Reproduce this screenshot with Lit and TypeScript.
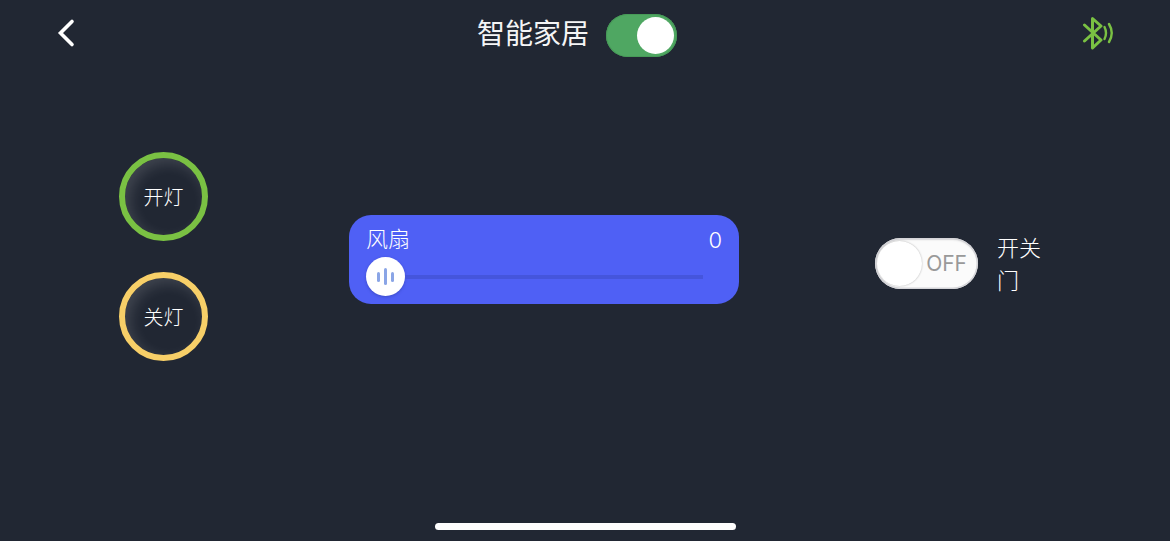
import { LitElement, html, css } from "lit";
import { customElement } from "lit/decorators.js";

@customElement("app-root")
export class AppRoot extends LitElement {
  static styles = css`
    :host {
      display: block;
      width: 1170px;
      height: 541px;
      overflow: hidden;
      font-family: "Noto Sans CJK SC", sans-serif;
      color: #fff;
    }
    .page {
      display: flex;
      flex-direction: column;
      height: 541px;
      background: #212733;
    }
    .header {
      display: grid;
      grid-template-columns: 477px auto 1fr;
      align-items: center;
      height: 43px;
      padding-top: 14px;
    }
    .back {
      display: block;
      margin: -5px 0 0 56px;
    }
    .title-group {
      display: flex;
      align-items: center;
      gap: 17px;
    }
    .title {
      font-size: 28px;
      line-height: 40px;
      font-weight: 400;
      margin-top: -7px;
      color: #f4f5f6;
    }
    .switch-on {
      box-sizing: border-box;
      display: flex;
      justify-content: flex-end;
      align-items: center;
      width: 71px;
      height: 43px;
      padding-right: 3px;
      border-radius: 22px;
      background: #4fa762;
      box-shadow: inset 0 0 0 1px #479a58;
    }
    .switch-on i {
      display: block;
      width: 37px;
      height: 37px;
      border-radius: 50%;
      background: #fff;
    }
    .bt {
      display: block;
      justify-self: end;
      margin: -6px 55px 0 0;
    }
    .body {
      display: flex;
      align-items: flex-start;
      padding: 95px 0 0 119px;
    }
    .lights {
      display: flex;
      flex-direction: column;
      gap: 31px;
      width: 89px;
    }
    .light {
      box-sizing: border-box;
      display: flex;
      align-items: center;
      justify-content: center;
      width: 89px;
      height: 89px;
      border-radius: 50%;
      border: 6px solid #7ac143;
      font-size: 20px;
      font-weight: 300;
      color: #fff;
      background: #212733;
      box-shadow: inset 5px 5px 14px rgba(255, 255, 255, 0.14);
    }
    .light.off {
      border-color: #f7cf68;
    }
    .card {
      box-sizing: border-box;
      width: 390px;
      height: 89px;
      margin: 63px 0 0 141px;
      padding: 8px 17px 0;
      border-radius: 22px;
      background: #4f60f5;
    }
    .card-head {
      display: flex;
      justify-content: space-between;
      align-items: center;
      height: 34px;
      font-size: 22px;
      line-height: 34px;
      font-weight: 300;
    }
    .name {
      margin-bottom: 6px;
    }
    .value {
      font-family: "Inter", sans-serif;
      font-size: 22px;
      font-weight: 300;
    }
    .slider {
      display: flex;
      align-items: center;
    }
    .thumb {
      display: flex;
      align-items: center;
      justify-content: center;
      gap: 4px;
      width: 39px;
      height: 39px;
      border-radius: 50%;
      background: #fff;
      box-shadow: 0 1px 3px rgba(30, 40, 120, 0.35);
      flex: none;
    }
    .thumb i {
      display: block;
      width: 3px;
      height: 10px;
      border-radius: 1.5px;
      background: #8aa5e6;
    }
    .thumb i.tall {
      height: 17px;
    }
    .track {
      width: 298px;
      height: 4px;
      background: #4555dc;
    }
    .door {
      display: flex;
      align-items: center;
      gap: 19px;
      margin: 78px 0 0 136px;
    }
    .switch-off {
      box-sizing: border-box;
      display: flex;
      align-items: center;
      width: 103px;
      height: 51px;
      padding: 0 11px 0 2px;
      justify-content: space-between;
      border-radius: 26px;
      background: #fbfbfb;
      box-shadow: inset 0 0 0 1.5px #d4d4d8, inset 0 2px 2px rgba(0, 0, 0, 0.12);
    }
    .switch-off i {
      display: block;
      width: 45px;
      height: 45px;
      border-radius: 50%;
      background: #fff;
      box-shadow: 0 0 2px rgba(0, 0, 0, 0.3);
    }
    .switch-off span {
      font-family: "Inter", sans-serif;
      font-size: 21px;
      font-weight: 400;
      color: #999;
    }
    .door-label {
      width: 46px;
      font-size: 22px;
      line-height: 33px;
      font-weight: 300;
      color: #fff;
    }
    .home {
      width: 301px;
      height: 7px;
      margin: auto 0 11px 435px;
      border-radius: 4px;
      background: #fff;
    }
  `;

  render() {
    return html`
      <div class="page">
        <header class="header">
          <svg class="back" width="22" height="30" viewBox="0 0 22 30" fill="none" stroke="#fff" stroke-width="3.6" stroke-linecap="round" stroke-linejoin="miter">
            <path d="M16 3.5 L4.5 15 L16 26.5" />
          </svg>
          <div class="title-group">
            <span class="title">智能家居</span>
            <div class="switch-on"><i></i></div>
          </div>
          <svg class="bt" width="33" height="34" viewBox="0 0 33 34" fill="none" stroke="#7ac143" stroke-linecap="round" stroke-linejoin="round">
            <path stroke-width="3" d="M2.5 9 L19 24 L10.5 32 V2.5 L19 10 L2.5 25" />
            <path stroke-width="2.4" d="M22.5 11 Q25.5 17 22.5 23" />
            <path stroke-width="2.4" d="M27 8 Q32.5 17 27 26" />
          </svg>
        </header>
        <main class="body">
          <div class="lights">
            <div class="light">开灯</div>
            <div class="light off">关灯</div>
          </div>
          <section class="card">
            <div class="card-head"><span class="name">风扇</span><span class="value">0</span></div>
            <div class="slider">
              <div class="thumb"><i></i><i class="tall"></i><i></i></div>
              <div class="track"></div>
            </div>
          </section>
          <div class="door">
            <div class="switch-off"><i></i><span>OFF</span></div>
            <div class="door-label">开关门</div>
          </div>
        </main>
        <div class="home"></div>
      </div>
    `;
  }
}
